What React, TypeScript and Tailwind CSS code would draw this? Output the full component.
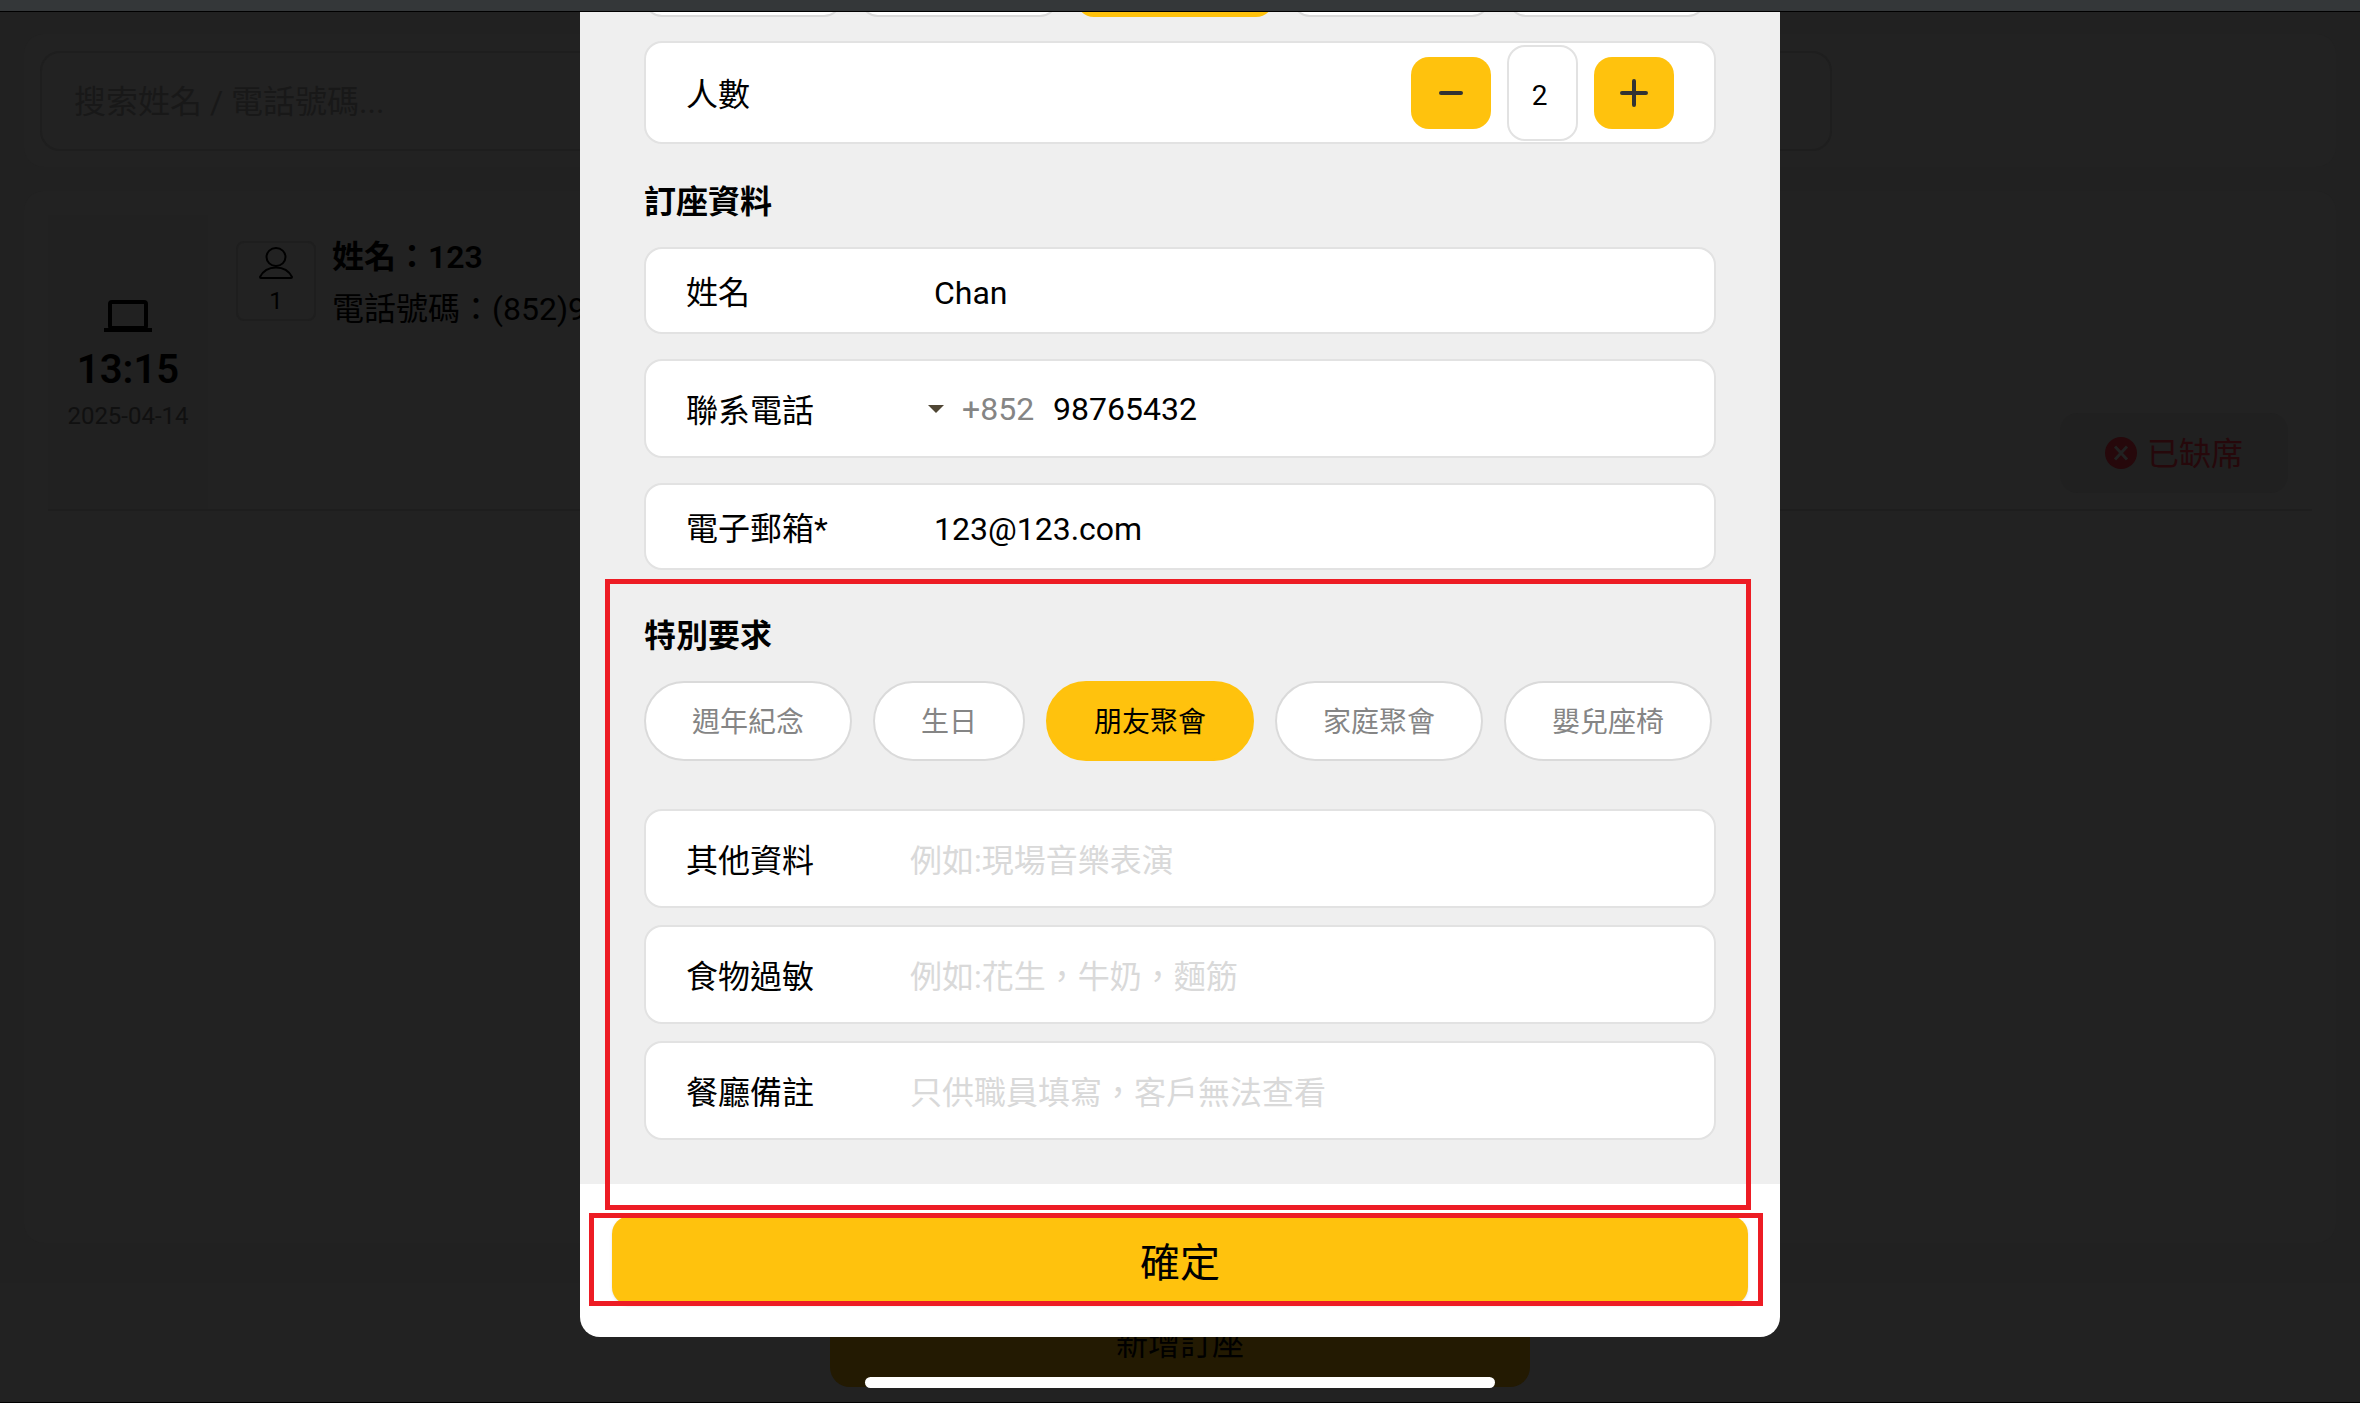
import { useState, type ReactNode } from "react";

const FONT = "font-[Roboto,'Noto_Sans_CJK_TC',sans-serif]";

function LaptopIcon() {
  return (
    <svg width="48" height="36" viewBox="0 0 48 36" fill="none" stroke="#000" aria-hidden="true">
      <rect x="6" y="2" width="36" height="26" rx="2" strokeWidth="4" />
      <path d="M0 30h48" strokeWidth="4" />
    </svg>
  );
}

function PersonIcon() {
  return (
    <svg width="34" height="32" viewBox="0 0 34 32" fill="none" stroke="#000" strokeWidth="2" strokeLinejoin="round" aria-hidden="true">
      <ellipse cx="17" cy="10" rx="9.5" ry="9" />
      <path d="M17 20.500c-7 0-13 3.500-16 9.500 0 .6.300 1 1 1h30c.7 0 1-.4 1-1-3-6-9-9.500-16-9.500z" />
    </svg>
  );
}

function CancelIcon() {
  return (
    <svg width="32" height="32" viewBox="0 0 32 32" aria-hidden="true">
      <circle cx="16" cy="16" r="16" fill="#26080b" />
      <path d="M10 9.500l12 13M22 9.500l-12 13" stroke="#222" strokeWidth="3" />
    </svg>
  );
}

function Field({ id, label, height, children }: { id: string; label: string; height: string; children: ReactNode }) {
  return (
    <div className={`flex items-center rounded-[18px] border-2 border-[#e2e2e2] bg-white px-10 ${height}`}>
      <label htmlFor={id} className="w-[224px] shrink-0 pt-1 text-[32px] leading-[48px]">
        {label}
      </label>
      {children}
    </div>
  );
}

const inputClass =
  "min-w-0 flex-1 bg-transparent text-[32px] leading-[48px] outline-none placeholder:text-[#d9d9d9] placeholder:opacity-100";

function Heading({ children }: { children: ReactNode }) {
  return <h2 className="text-[32px] leading-[48px] font-bold">{children}</h2>;
}

const slots = [1, 2, 3, 4, 5];
const requests = ["週年紀念", "生日", "朋友聚會", "家庭聚會", "嬰兒座椅"];
const notes = [
  { id: "other", label: "其他資料", hint: "例如:現場音樂表演" },
  { id: "allergy", label: "食物過敏", hint: "例如:花生，牛奶，麵筋" },
  { id: "remark", label: "餐廳備註", hint: "只供職員填寫，客戶無法查看" },
];

function Stepper() {
  const [count, setCount] = useState(2);
  const button = "flex h-[72px] w-20 items-center justify-center rounded-[18px] bg-[#ffc20d]";
  return (
    <div className="ml-auto flex items-center gap-4">
      <button type="button" aria-label="減少" className={button} onClick={() => setCount(count - 1)}>
        <svg width="28" height="28" viewBox="0 0 28 28" stroke="#333" strokeWidth="4" strokeLinecap="round">
          <path d="M4 14h20" />
        </svg>
      </button>
      <input
        id="people"
        value={count}
        readOnly
        className="h-24 w-[71px] rounded-[18px] border-2 border-[#e2e2e2] bg-white pt-1.5 pr-1.5 text-center text-[28px] outline-none"
      />
      <button type="button" aria-label="增加" className={button} onClick={() => setCount(count + 1)}>
        <svg width="28" height="28" viewBox="0 0 28 28" stroke="#333" strokeWidth="4" strokeLinecap="round">
          <path d="M2 14h24M14 2v24" />
        </svg>
      </button>
    </div>
  );
}

function ReservationDialog() {
  const [request, setRequest] = useState("朋友聚會");
  return (
    <div role="dialog" aria-label="訂座" className="w-full max-w-[1200px] overflow-hidden rounded-b-[20px] bg-white">
      <div className="bg-[#efefef] px-16 pb-11">
        <div className="-mt-[75px] flex gap-[18px]">
          {slots.map((n) => (
            <button
              key={n}
              type="button"
              aria-label={`時段 ${n}`}
              className={`h-20 w-[198px] rounded-[18px] border-2 ${n === 3 ? "border-[#ffc20d] bg-[#ffc20d]" : "border-[#dadada] bg-white"}`}
            />
          ))}
        </div>

        <div className="mt-6">
          <Field id="people" label="人數" height="h-[103px]">
            <Stepper />
          </Field>
        </div>

        <section className="mt-[34px]">
          <Heading>訂座資料</Heading>
          <div className="mt-[21px] flex flex-col gap-[25px]">
            <Field id="name" label="姓名" height="h-[87px]">
              <input id="name" defaultValue="Chan" className={`${inputClass} pt-1 pl-6`} />
            </Field>
            <Field id="phone" label="聯系電話" height="h-[99px]">
              <svg width="16" height="8" viewBox="0 0 16 8" className="ml-[18px] mr-[18px] shrink-0" aria-hidden="true">
                <path d="M0 0h16L8 8z" fill="#4f4634" />
              </svg>
              <select aria-label="區號" className="w-[91px] appearance-none bg-transparent text-[32px] leading-[48px] text-[#858585] outline-none">
                <option>+852</option>
              </select>
              <input id="phone" type="tel" defaultValue="98765432" className={inputClass} />
            </Field>
            <Field id="email" label="電子郵箱*" height="h-[87px]">
              <input id="email" type="email" defaultValue="123@123.com" className={`${inputClass} pt-1 pl-6`} />
            </Field>
          </div>
        </section>

        <section className="relative z-10 mt-[42px]">
          <Heading>特別要求</Heading>
          <div className="mt-[21px] flex gap-[21px]">
            {requests.map((name) => (
              <button
                key={name}
                type="button"
                aria-pressed={name === request}
                onClick={() => setRequest(name)}
                className={`h-20 rounded-full border-2 px-[46px] pt-1 text-[28px] whitespace-nowrap ${
                  name === request ? "border-[#ffc20d] bg-[#ffc20d] text-black" : "border-[#dadada] bg-white text-[#858585]"
                }`}
              >
                {name}
              </button>
            ))}
          </div>
          <div className="mt-12 flex flex-col gap-[17px]">
            {notes.map((note) => (
              <Field key={note.id} id={note.id} label={note.label} height="h-[99px]">
                <input id={note.id} placeholder={note.hint} className={`${inputClass} pt-1`} />
              </Field>
            ))}
          </div>
          <div className="pointer-events-none absolute -top-[33px] -right-[35px] -bottom-[70px] -left-[39px] border-[5px] border-[#ed1c24]" />
        </section>
      </div>

      <div className="px-8 pt-8 pb-8">
        <div className="relative">
          <button type="button" className="block h-[89px] w-full rounded-[18px] bg-[#ffc20d] pt-1.5 text-[40px] shadow-sm">
            確定
          </button>
          <div className="pointer-events-none absolute -top-[3px] -right-[15px] -bottom-px -left-[23px] border-[5px] border-[#ed1c24]" />
        </div>
      </div>
    </div>
  );
}

function ReservationRow() {
  return (
    <article className="flex border-b-2 border-[#1e1e1e]">
      <div className="flex h-[294px] w-40 shrink-0 flex-col items-center bg-[#212121] pt-[85px]">
        <LaptopIcon />
        <time className="mt-2 text-[40px] leading-[52px] font-semibold">13:15</time>
        <time className="mt-2 text-[24px] leading-6 text-[#101010]">2025-04-14</time>
      </div>
      <div className="ml-7 mt-[26px] flex h-20 w-20 shrink-0 flex-col items-center gap-1 rounded-lg border-2 border-[#1e1e1e] pt-1">
        <PersonIcon />
        <span className="text-[24px] leading-9">1</span>
      </div>
      <div className="ml-4 mt-4 text-[32px]">
        <h3 className="leading-[52px] font-semibold">姓名：123</h3>
        <p className="leading-[52px] whitespace-nowrap">電話號碼：(852)9</p>
      </div>
      <div className="mt-auto mr-6 mb-4 ml-auto flex h-20 w-[228px] items-center justify-center gap-[10px] rounded-[18px] bg-[#202020] text-[32px] text-[#26080b]">
        <CancelIcon />
        <span className="pt-0.5">已缺席</span>
      </div>
    </article>
  );
}

export default function App() {
  return (
    <div className={`relative flex min-h-screen flex-col overflow-hidden border-b border-black bg-[#212121] text-black ${FONT}`}>
      <div className="h-3 shrink-0 border-b border-black bg-[#343739]" />

      <main className="flex flex-1 flex-col px-6 pt-[22px] pb-10">
        <div className="rounded-[20px] bg-[#222222] px-4 pt-[17px] pb-4">
          <input
            aria-label="搜索"
            placeholder="搜索姓名 / 電話號碼..."
            className="block h-[100px] w-full max-w-[1792px] rounded-[20px] border-2 border-[#1e1e1e] bg-transparent px-8 pt-0.5 text-[32px] outline-none placeholder:text-[#181818] placeholder:opacity-100"
          />
        </div>
        <div className="mt-6 flex-1 rounded-[20px] bg-[#222222] px-6 pt-6">
          <ReservationRow />
        </div>
      </main>

      <footer className="flex justify-center bg-[#222222] pt-4 pb-[15px]">
        <button type="button" className="h-[88px] w-[700px] rounded-[20px] bg-[#231a02] pt-0.5 text-[32px]">
          新增訂座
        </button>
      </footer>

      <div className="absolute inset-x-0 top-3 flex justify-center">
        <ReservationDialog />
      </div>
      <div className="absolute inset-x-0 bottom-[14px] flex justify-center">
        <div className="h-[11px] w-[630px] rounded-full bg-white" />
      </div>
    </div>
  );
}
